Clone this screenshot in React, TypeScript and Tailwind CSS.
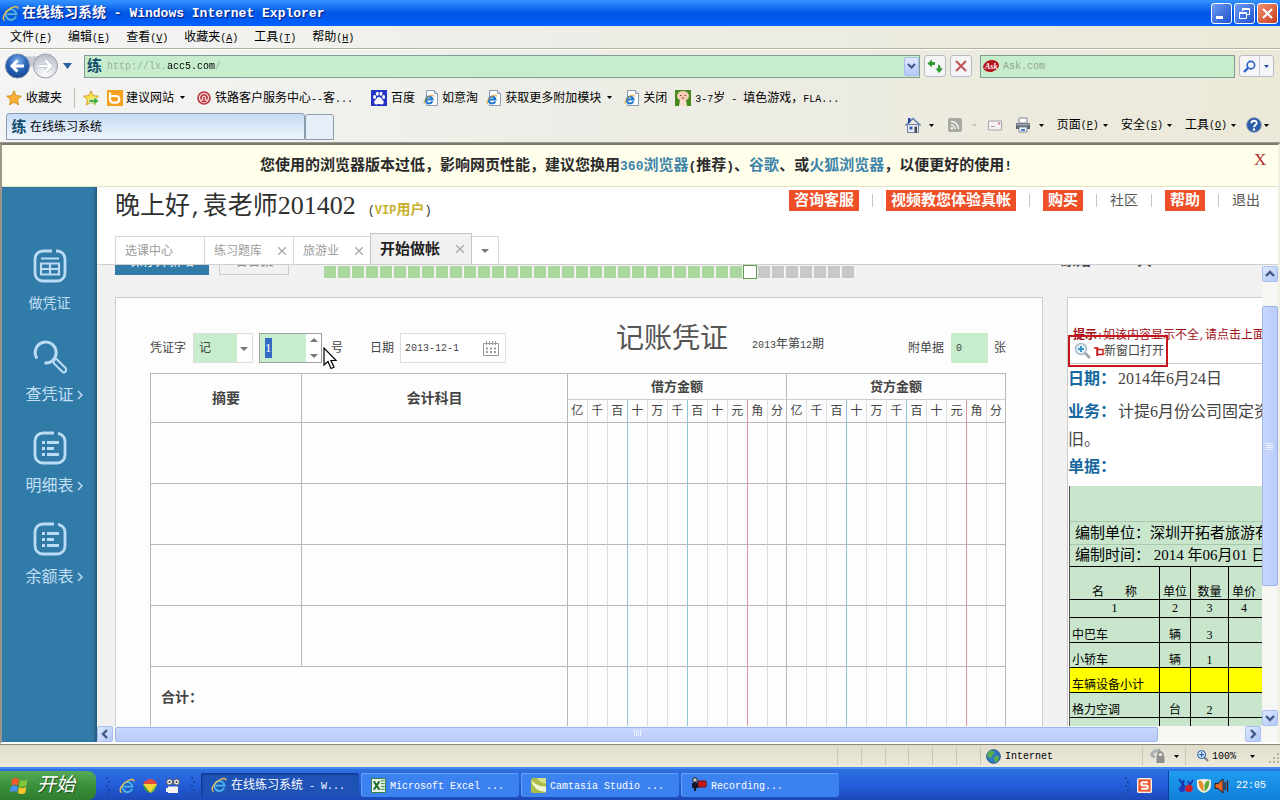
import React, { useEffect, useRef } from 'react';
import { clsx } from 'clsx';

type MixProps = { s: string; latin?: string };

// Chinese runs keep the parent's size, latin runs get a half-width monospace face
const Mix: React.FC<MixProps> = ({ s, latin = 'text-[10px]' }) => (
    <>
        {s.split(/([\x20-\x7e]+)/).filter(Boolean).map((part, i) =>
            /^[\x20-\x7e]/.test(part)
                ? <span key={i} className={clsx("whitespace-pre font-['Liberation_Mono']", latin)}>{part}</span>
                : <React.Fragment key={i}>{part}</React.Fragment>
        )}
    </>
);

const Caret: React.FC<{ className?: string }> = ({ className = 'text-black' }) => (
    <svg viewBox="0 0 5 3" className={clsx('h-[3px] w-[5px] shrink-0', className)}><path d="M0 0h5L2.500 3z" fill="currentColor" /></svg>
);

const IeLogo: React.FC<{ className?: string }> = ({ className = 'h-4 w-4' }) => (
    <svg viewBox="0 0 16 16" className={clsx('shrink-0', className)} fill="none">
        <path d="M13.200 10.800A5 5 0 1 1 13.500 8.600H5" stroke="#1b62b8" strokeWidth="3.400" />
        <path d="M13.200 10.800A5 5 0 1 1 13.500 8.600H5" stroke="#4fb0f2" strokeWidth="1.800" />
        <path d="M2.600 14.800C-1 12.500 3 6 8.400 3c3.300-1.900 6.700-2.300 6.600.6" stroke="#f2c14a" strokeWidth="1.300" />
    </svg>
);

const IePage = () => (
    <svg viewBox="0 0 16 16" className="h-4 w-4 shrink-0">
        <path d="M3.500.5h8l3 3v12h-11z" fill="#fdfdfd" stroke="#8c9bb0" />
        <path d="M11.500.5v3h3" fill="#dfe6ef" stroke="#8c9bb0" />
        <g fill="none">
            <path d="M9.300 11.300A3.400 3.400 0 1 1 9.500 9.500H3.500" stroke="#1f78d0" strokeWidth="2" />
            <path d="M1.500 13.800C-.4 12 4 6.300 8.500 5.200c1.700-.4 2.400.2 2.200 1.400" stroke="#e0a020" />
        </g>
    </svg>
);

const LianIcon = () => (
    <span className="w-4 shrink-0 text-[15px] leading-4 font-bold text-[#134d6e]">练</span>
);

const MENUS: [string, string][] = [['文件', 'F'], ['编辑', 'E'], ['查看', 'V'], ['收藏夹', 'A'], ['工具', 'T'], ['帮助', 'H']];

const AccessKey: React.FC<{ k: string }> = ({ k }) => (
    <span className="font-['Liberation_Mono'] text-[10px]">(<u>{k}</u>)</span>
);

const TitleBar = () => (
    <header className="flex h-[26px] shrink-0 items-center bg-linear-to-b from-[#3593ff] via-[#0054e3] to-[#0062ff] pr-[2px] pl-[2px]">
        <IeLogo className="h-[17px] w-[17px]" />
        <h1 className="ml-[3px] text-[14px] font-bold text-white [text-shadow:1px_1px_1px_#0a1883]">
            <Mix s="在线练习系统 - Windows Internet Explorer" latin="text-[13px]" />
        </h1>
        <div className="ml-auto flex gap-[2px]">
            <button aria-label="最小化" className="h-[21px] w-[21px] rounded-[3px] border border-white bg-linear-to-br from-[#6f9cf4] to-[#1f50cc]">
                <svg viewBox="0 0 19 19"><path d="M4 12h7v3H4z" fill="#fff" /></svg>
            </button>
            <button aria-label="还原" className="h-[21px] w-[21px] rounded-[3px] border border-white bg-linear-to-br from-[#6f9cf4] to-[#1f50cc]">
                <svg viewBox="0 0 19 19" fill="none" stroke="#fff"><path d="M7.500 7V4.500h7v6H12M7 5.500h8M4.500 8.500h7v6h-7zM4 9.500h8" /></svg>
            </button>
            <button aria-label="关闭" className="h-[21px] w-[21px] rounded-[3px] border border-white bg-linear-to-br from-[#f09070] to-[#c8391a]">
                <svg viewBox="0 0 19 19"><path d="M5 5l9 9M14 5l-9 9" stroke="#fff" strokeWidth="2.200" /></svg>
            </button>
        </div>
    </header>
);

const AddressRow = () => (
    <div className="flex h-[33px] shrink-0 items-center border-t border-white pr-[6px] pl-[5px]">
        <svg viewBox="0 0 56 28" className="h-7 w-14 shrink-0">
            <defs>
                <radialGradient id="back" cx=".5" cy=".3" r=".75"><stop offset="0" stopColor="#86b4ee" /><stop offset=".5" stopColor="#2a66b8" /><stop offset="1" stopColor="#0f3c8c" /></radialGradient>
                <radialGradient id="fwd" cx=".5" cy=".8" r=".8"><stop offset="0" stopColor="#fff" /><stop offset="1" stopColor="#b6bcc8" /></radialGradient>
            </defs>
            <path d="M8 2.500q20 4 38 0v12H8z" fill="#c6cbd3" />
            <circle cx="12.500" cy="14" r="12" fill="url(#back)" stroke="#7d8da8" />
            <circle cx="40.500" cy="14" r="12" fill="url(#fwd)" stroke="#9aa0ac" />
            <path d="M19 14H8M12.500 8.500L7 14l5.500 5.500" stroke="#fff" strokeWidth="3" fill="none" />
            <path d="M34 14h11M40.500 8.500L46 14l-5.500 5.500" stroke="#b4bac6" strokeWidth="4" fill="none" />
            <path d="M34 14h11M40.500 8.500L46 14l-5.500 5.500" stroke="#fff" strokeWidth="2.600" fill="none" />
        </svg>
        <svg viewBox="0 0 9 6" className="ml-[2px] h-[6px] w-[9px] shrink-0"><path d="M0 0h9L4.500 6z" fill="#2b5f9e" /></svg>
        <div className="ml-3 flex h-[23px] min-w-0 flex-1 items-center border border-[#7f9f96] bg-[#c7edcc] pl-[2px]">
            <LianIcon />
            <input
                aria-label="地址"
                defaultValue="http://lx.acc5.com/"
                className="ml-[4px] h-4 min-w-0 flex-1 bg-[linear-gradient(90deg,#98a898_60px,#000_60px,#000_108px,#98a898_108px)] bg-clip-text font-['Liberation_Mono'] text-[10px] text-transparent outline-none"
            />
            <button aria-label="展开地址" className="flex h-[19px] w-[15px] items-center justify-center rounded-[2px] border border-[#a9bef0] bg-linear-to-b from-[#dfe8ff] to-[#b5c9f8]">
                <svg viewBox="0 0 9 6" className="h-[6px] w-[9px]"><path d="M1 1l3.500 3.500L8 1" fill="none" stroke="#3d5588" strokeWidth="2" /></svg>
            </button>
        </div>
        <button aria-label="刷新" className="ml-1 flex h-[22px] w-[22px] shrink-0 items-center justify-center rounded-[3px] border border-[#b9bcc4] bg-[#f5f5f7]">
            <svg viewBox="0 0 16 16" className="h-4 w-4" fill="#2f9a2f"><path d="M5 1.500L.500 5.500 5 9.500V7h3V4H5z" /><path d="M11 6.500v4H8.500L12 15l4-4.500h-2.300c0-2.500-.7-3.700-2.700-4z" /></svg>
        </button>
        <button aria-label="停止" className="ml-1 flex h-[22px] w-[22px] shrink-0 items-center justify-center rounded-[3px] border border-[#b9bcc4] bg-[#f5f5f7]">
            <svg viewBox="0 0 12 12" className="h-3 w-3"><path d="M1 1l10 10M11 1L1 11" stroke="#c05a5a" strokeWidth="2.200" /></svg>
        </button>
        <label className="ml-2 flex h-[23px] w-[255px] shrink-0 items-center border border-[#7f9f96] bg-[#c7edcc] pl-[2px]">
            <svg viewBox="0 0 16 14" className="h-[14px] w-4 shrink-0">
                <ellipse cx="8" cy="7" rx="8" ry="5.800" fill="#b5131c" transform="rotate(-14 8 7)" />
                <text x="2" y="10" fontSize="8" fontStyle="italic" fontWeight="bold" fill="#fff">Ask</text>
            </svg>
            <input placeholder="Ask.com" className="ml-1 min-w-0 flex-1 font-['Liberation_Mono'] text-[10px] outline-none placeholder:text-[#93a393]" />
        </label>
        <div className="ml-1 flex h-[22px] w-[35px] shrink-0 rounded-[3px] border border-[#b9bcc4] bg-[#f5f5f7]">
            <button aria-label="搜索" className="flex w-5 items-center justify-center border-r border-[#c9ccd4]">
                <svg viewBox="0 0 14 14" className="h-[13px] w-[13px]" fill="none" stroke="#2a62c8"><circle cx="8.500" cy="5.500" r="4" strokeWidth="1.800" /><path d="M5.500 8.500L1 13" strokeWidth="2.400" /></svg>
            </button>
            <button aria-label="搜索选项" className="flex flex-1 items-center justify-center"><Caret className="text-[#1f4f9e]" /></button>
        </div>
    </div>
);

const Star: React.FC<{ add?: boolean }> = ({ add }) => (
    <svg viewBox="0 0 16 16" className="h-4 w-4 shrink-0">
        <path d="M8 .8l2.200 4.800 5.200.6-3.900 3.500 1.100 5.200L8 12.300l-4.600 2.600 1.100-5.200L.6 6.200l5.200-.6z" fill={add ? '#f7e14c' : '#fbb034'} stroke="#c98a14" strokeWidth=".8" />
        {add && <path d="M6 9.500h5V7l5 4-5 4v-2.500H6z" fill="#3fae3a" stroke="#fff" strokeWidth=".6" />}
    </svg>
);

const FavoritesBar = () => (
    <nav className="flex h-[31px] shrink-0 items-center pl-[6px] text-[12px] whitespace-nowrap">
        <button className="flex items-center gap-1"><Star />收藏夹</button>
        <span className="ml-3 h-5 w-px bg-[#bdbdb5]" />
        <span className="ml-2 flex"><Star add /></span>
        <a href="#bing" className="ml-2 flex items-center gap-[3px]">
            <svg viewBox="0 0 16 16" className="h-4 w-4"><path d="M0 0h16v16H0z" fill="#f5a11c" /><path d="M3 2.500v3.500h6.500a3.400 3.400 0 0 1 0 6.700H6.400a3.400 3.400 0 0 1-3.400-3.400V6" fill="none" stroke="#fff" strokeWidth="2.200" /></svg>
            建议网站
            <span className="ml-[3px]"><Caret /></span>
        </a>
        <a href="#rail" className="ml-3 flex items-center gap-1">
            <svg viewBox="0 0 14 14" className="h-[14px] w-[14px]"><circle cx="7" cy="7" r="6" fill="#f6dada" stroke="#b8343c" strokeWidth="1.600" /><path d="M4.500 8.500a3 3 0 1 1 5 0M7 6v4M4.500 10.500h5" stroke="#b8343c" strokeWidth="1.500" fill="none" /></svg>
            <span><Mix s="铁路客户服务中心--客..." /></span>
        </a>
        <a href="#baidu" className="ml-[18px] flex items-center gap-1">
            <svg viewBox="0 0 16 16" className="h-4 w-4"><path d="M0 0h16v16H0z" fill="#2534c4" /><g fill="#fff"><ellipse cx="3.600" cy="7" rx="1.500" ry="2" /><ellipse cx="6.300" cy="3.700" rx="1.500" ry="2" /><ellipse cx="10" cy="3.700" rx="1.500" ry="2" /><ellipse cx="12.600" cy="7" rx="1.500" ry="2" /><path d="M8 7c2 0 2.500 2 4 3.500s.7 4-1.500 4c-1.200 0-1.500-.4-2.500-.4s-1.300.4-2.500.4c-2.200 0-3-2.500-1.500-4S6 7 8 7z" /></g></svg>
            百度
        </a>
        <a href="#taobao" className="ml-2 flex items-center gap-[3px]"><IePage />如意淘</a>
        <a href="#addons" className="ml-2 flex items-center gap-[3px]"><IePage />获取更多附加模块<span className="ml-[3px]"><Caret /></span></a>
        <a href="#close" className="ml-3 flex items-center gap-[3px]"><IePage />关闭</a>
        <a href="#game" className="ml-2 flex items-center gap-1">
            <svg viewBox="0 0 16 16" className="h-4 w-4"><path d="M0 0h16v16H0z" fill="#47881f" /><ellipse cx="8" cy="6" rx="6" ry="5" fill="#f4cdb4" /><path d="M5 10h6l1 6H4z" fill="#f8e0cc" /><path d="M5 5.500h1.500M9.500 5.500H11M7 8h2" stroke="#8b4a32" /></svg>
            <span><Mix s="3-7岁 - 填色游戏，FLA..." /></span>
        </a>
    </nav>
);

const CommandBar = () => (
    <div className="flex h-[30px] shrink-0 items-start border-b border-[#9a9a92] pl-[6px] text-[12px]">
        <button className="flex h-[27px] w-[299px] items-center gap-[3px] rounded-t-[3px] border border-[#8b9bb0] bg-linear-to-b from-[#c7dcf6] to-[#eef4fb] pl-1">
            <LianIcon />在线练习系统
        </button>
        <button aria-label="新选项卡" className="mt-px h-[26px] w-[29px] rounded-t-[3px] border border-[#8b9bb0] bg-[#e6eef8]" />
        <div className="ml-auto flex h-6 items-center pr-[11px]">
            <svg viewBox="0 0 16 16" className="h-4 w-4"><path d="M2.500 7.500h11v8h-11z" fill="#eef0f6" stroke="#70809c" /><path d="M.5 8.500L8 1.500l7.500 7" fill="none" stroke="#6a83b8" strokeWidth="1.600" /><path d="M3 1h2.500v4L3 7z" fill="#2c3f9c" /><path d="M4.500 9.500h3v3h-3z" fill="#2f5fb0" /><path d="M9.500 9.500h2.500v6H9.500z" fill="#3b4356" /></svg>
            <span className="ml-2 flex"><Caret /></span>
            <svg viewBox="0 0 14 14" className="ml-[14px] h-[14px] w-[14px]"><rect width="14" height="14" rx="2" fill="#a9a9a2" /><g fill="none" stroke="#f4f4f0" strokeWidth="1.500"><path d="M3 7a4 4 0 0 1 4 4M3 3.500A7.500 7.500 0 0 1 10.500 11" /></g><circle cx="3.800" cy="10.200" r="1.200" fill="#f4f4f0" /></svg>
            <span className="ml-[10px] flex"><Caret className="text-[#c8c6b8]" /></span>
            <svg viewBox="0 0 14 10" className="ml-[11px] h-[11px] w-[14px]"><path d="M.5.5h13v9H.5z" fill="#f3f1f4" stroke="#a8a0a8" /><path d="M10 2h2v2h-2z" fill="#c87a86" /><path d="M3 6h4" stroke="#a8a0a8" /></svg>
            <svg viewBox="0 0 16 16" className="ml-[13px] h-4 w-4"><path d="M4 1h8v5H4z" fill="#fff" stroke="#808890" /><path d="M1 6h14v6H1z" fill="#5d6670" /><path d="M1.500 6.500h13v2h-13z" fill="#9aa4ae" /><path d="M4 10h8v5H4z" fill="#fff" stroke="#808890" /><path d="M6 12h4v2H6z" fill="#3f88c8" /></svg>
            <span className="ml-2 flex"><Caret /></span>
            {[['页面', 'P'], ['安全', 'S'], ['工具', 'O']].map(([label, k]) => (
                <button key={k} className="ml-[13px] flex items-center whitespace-nowrap">
                    {label}<AccessKey k={k} /><span className="ml-1 flex"><Caret /></span>
                </button>
            ))}
            <svg viewBox="0 0 16 16" className="ml-[10px] h-4 w-4"><circle cx="8" cy="8" r="7.300" fill="#2c5ca8" stroke="#7f93b8" /><path d="M5.300 6.300C5.300 3 10.700 3 10.700 6.100 10.700 8 8 8 8 10.200" stroke="#fff" strokeWidth="1.900" fill="none" /><circle cx="8" cy="12.500" r="1.200" fill="#fff" /></svg>
            <span className="ml-[2px] flex"><Caret /></span>
        </div>
    </div>
);

const Banner = () => (
    <div className="flex h-[42px] shrink-0 items-center border-b border-[#e3e3c8] bg-[#fffeeb]">
        <p className="flex-1 pl-4 text-center text-[15px] font-bold text-[#2a2a2a]">
            您使用的浏览器版本过低，影响网页性能，建议您换用
            <a href="#360" className="text-[#3d84a8]"><Mix s="360浏览器" latin="text-[13px]" /></a>
            <Mix s="(推荐)、" latin="text-[13px]" />
            <a href="#chrome" className="text-[#3d84a8]">谷歌</a>、或
            <a href="#firefox" className="text-[#3d84a8]">火狐浏览器</a>，以便更好的使用<Mix s="!" latin="text-[13px]" />
        </p>
        <button aria-label="关闭提示" className="mb-3 w-6 pr-3 font-['Liberation_Serif'] text-[17px] leading-5 text-[#b03030]">X</button>
    </div>
);

const SheetIcon = () => (
    <svg viewBox="0 0 34 34" className="h-[34px] w-[34px]" fill="none" stroke="#bcdcf6">
        <path d="M23 2h1a8 8 0 0 1 8 8v14a8 8 0 0 1-8 8H10a8 8 0 0 1-8-8V10a8 8 0 0 1 8-8h9" strokeWidth="2.800" />
        <path d="M8 9.500h18" strokeWidth="2" />
        <path d="M8 14.500h18v11H8zM8 20h18M17 14.500v11" strokeWidth="2.200" />
    </svg>
);

const SearchIcon = () => (
    <svg viewBox="0 0 34 34" className="h-[34px] w-[34px]" fill="none" stroke="#bcdcf6">
        <path d="M4 18.500A10.500 10.500 0 1 1 11.500 23" strokeWidth="3" />
        <path d="M21 20l2.500-1 9 9a2.200 2.200 0 0 1-3.500 3.500l-8.500-8.500z" strokeWidth="2" />
    </svg>
);

const ListIcon = () => (
    <svg viewBox="0 0 34 34" className="h-[34px] w-[34px]" fill="none" stroke="#bcdcf6">
        <path d="M25 2.300A8 8 0 0 1 32 10v14a8 8 0 0 1-8 8H10a8 8 0 0 1-8-8V10a8 8 0 0 1 8-8h11" strokeWidth="2.800" />
        <path d="M9 11.500h3M14 11.500h12M9 17.500h3M14 17.500h7M9 23.500h3M14 23.500h12" strokeWidth="2.800" />
    </svg>
);

const SIDE_ITEMS = [
    { label: '做凭证', icon: <SheetIcon />, sub: false },
    { label: '查凭证', icon: <SearchIcon />, sub: true },
    { label: '明细表', icon: <ListIcon />, sub: true },
    { label: '余额表', icon: <ListIcon />, sub: true },
];

const Sidebar = () => (
    <aside className="w-[95px] shrink-0 bg-[#317ba8] pt-[62px] shadow-[inset_-3px_0_3px_-1px_#25597c]">
        {SIDE_ITEMS.map(({ label, icon, sub }) => (
            <a key={label} href="#" className="flex h-[91px] flex-col items-center text-[#c3dff5]">
                {icon}
                <span className={clsx('mt-[9px] flex items-center gap-[3px] leading-6', sub ? 'pl-[9px] text-[16px]' : 'text-[14px]')}>
                    {label}
                    {sub && <svg viewBox="0 0 6 10" className="h-[10px] w-[6px]"><path d="M1 1l4 4-4 4" fill="none" stroke="#c3dff5" strokeWidth="1.400" /></svg>}
                </span>
            </a>
        ))}
    </aside>
);

const Sep = () => <span className="h-[13px] w-px bg-[#c8c8c8]" />;

const Pill: React.FC<{ children: string }> = ({ children }) => (
    <a href="#" className="h-[21px] bg-[#ee4f26] px-[5px] text-[15px] leading-5 font-bold text-white">{children}</a>
);

const TabClose = () => (
    <svg viewBox="0 0 8 8" className="h-2 w-2"><path d="M0 0l8 8M8 0L0 8" stroke="#a8a8a8" strokeWidth="1.300" /></svg>
);

const PageHeader = () => (
    <div className="flex h-[78px] shrink-0 flex-col justify-between border-b border-[#cfcfcf] bg-white">
        <div className="flex items-start justify-between pr-[18px] pl-[18px]">
            <div className="flex items-baseline text-[#303030]">
                <strong className="text-[25px] leading-[38px] font-normal">
                    <Mix s="晚上好," latin="text-[21px]" />袁老师<span className="text-[26px]">201402</span>
                </strong>
                <span className="ml-3 text-[14px]">
                    <Mix s="(" latin="text-[12px]" /><b className="text-[#c9b02c]"><Mix s="VIP用户" latin="text-[12px]" /></b><Mix s=")" latin="text-[12px]" />
                </span>
            </div>
            <nav className="flex items-center gap-[13px] pt-[3px] text-[14px] whitespace-nowrap text-[#555]">
                <Pill>咨询客服</Pill><Sep />
                <Pill>视频教您体验真帐</Pill><Sep />
                <Pill>购买</Pill><Sep />
                <a href="#">社区</a><Sep />
                <Pill>帮助</Pill><Sep />
                <a href="#">退出</a>
            </nav>
        </div>
        <div className="flex items-end pl-[18px] text-[12px] text-[#9a9a9a]">
            <button className="h-[28px] w-[90px] border border-b-0 border-[#d8d8d8] pl-[9px] text-left">选课中心</button>
            <button className="flex h-[28px] w-[89px] items-center justify-between border-t border-r border-[#d8d8d8] pr-[7px] pl-[9px]">练习题库<TabClose /></button>
            <button className="flex h-[28px] w-[76px] items-center justify-between border-t border-[#d8d8d8] pr-[7px] pl-[9px]">旅游业<TabClose /></button>
            <button className="flex h-[31px] w-[102px] items-center justify-between border border-b-0 border-[#c4c4c4] bg-[#f1f1f1] pr-[7px] pl-[9px] text-[15px] font-bold text-[#222]">开始做帐<TabClose /></button>
            <button aria-label="更多标签" className="flex h-[28px] w-[27px] items-center justify-center border-t border-r border-[#d8d8d8]">
                <svg viewBox="0 0 8 4" className="h-1 w-2"><path d="M0 0h8L4 4z" fill="#777" /></svg>
            </button>
        </div>
    </div>
);

const STEPS = Array.from({ length: 38 }, (_, i) => i);

// Bottom edge of the toolbar that is scrolled under the header
const StepBar = () => (
    <div className="flex h-[14px] items-start">
        <div className="flex h-[10px] items-end whitespace-nowrap">
            <button className="h-7 w-[94px] shrink-0 bg-[#317ba8] text-[13px] text-white">保存并新增</button>
            <button className="ml-[10px] h-7 w-[70px] shrink-0 border border-[#ccc] text-[13px] text-[#777]">看答案</button>
        </div>
        <div className="ml-[35px] flex h-[14px] items-center">
            {STEPS.map((n) => (
                <span
                    key={n}
                    className={clsx(
                        n === 30 ? 'mr-px -ml-px h-[14px] w-[14px] border border-[#5c9a4c] bg-white' : 'mr-[2px] h-3 w-3',
                        n < 30 && 'bg-[#a9d79d]',
                        n > 30 && 'bg-[#c8c8c8]'
                    )}
                />
            ))}
        </div>
        <div className="ml-[205px] flex h-[4px] items-end gap-[46px] text-[15px] leading-[18px] font-bold whitespace-nowrap text-[#444]">
            <span>原始</span><span>共</span>
        </div>
    </div>
);

const VoucherForm = () => {
    const numberRef = useRef<HTMLInputElement>(null);

    useEffect(() => {
        numberRef.current?.focus();
        numberRef.current?.select();
    }, []);

    return (
        <form className="flex h-[30px] items-center text-[12px] whitespace-nowrap text-[#444]">
            <label htmlFor="word">凭证字</label>
            <div className="relative ml-[7px]">
                <select id="word" className="h-[30px] w-[60px] appearance-none border border-[#ddd] bg-[linear-gradient(90deg,#c7edcc_43px,#fff_43px)] pl-[5px] outline-none">
                    <option>记</option>
                </select>
                <svg viewBox="0 0 8 4" className="pointer-events-none absolute top-[14px] right-[5px] h-1 w-2"><path d="M0 0h8L4 4z" fill="#777" /></svg>
            </div>
            <div className="ml-[6px] flex h-[30px] w-[63px] border border-[#a0a0a0] bg-white">
                <input ref={numberRef} id="no" aria-label="凭证号" defaultValue="1" className="w-[46px] bg-[#c7edcc] pl-[5px] text-[13px] outline-none selection:bg-[#316ac5] selection:text-white" />
                <div className="flex flex-1 flex-col items-center justify-between py-1">
                    <button type="button" aria-label="增加" className="flex"><svg viewBox="0 0 8 4" className="h-1 w-2"><path d="M0 4h8L4 0z" fill="#777" /></svg></button>
                    <button type="button" aria-label="减少" className="flex"><svg viewBox="0 0 8 4" className="h-1 w-2"><path d="M0 0h8L4 4z" fill="#777" /></svg></button>
                </div>
            </div>
            <label htmlFor="no" className="relative ml-[9px]">
                号
                <svg viewBox="0 0 14 23" className="absolute top-2 -left-2 h-[23px] w-[14px]"><path d="M1 1v17l4-3.500 3 7 3-1.300-3-6.700h5.200z" fill="#fff" stroke="#000" strokeWidth="1.200" /></svg>
            </label>
            <label htmlFor="date" className="ml-[27px]">日期</label>
            <div className="ml-[6px] flex h-[30px] w-[106px] items-center border border-[#ddd] bg-white pr-[5px] pl-1">
                <input id="date" defaultValue="2013-12-1" className="w-[78px] font-['Liberation_Mono'] text-[10px] outline-none" />
                <svg viewBox="0 0 16 16" className="h-4 w-4" fill="none" stroke="#999"><path d="M.5 3.500h15v12H.5zM3.500 1v4M6.500 1v4M9.500 1v4M12.500 1v4" /><path d="M3 8.500h10M3 12h10" strokeWidth="2" strokeDasharray="2 2" /></svg>
            </div>
            <h2 className="mb-[18px] ml-[110px] text-[28px] leading-10 text-[#555]">记账凭证</h2>
            <span className="mb-2 ml-6 text-[12px]"><Mix s="2013年第12期" /></span>
            <label htmlFor="attach" className="mr-[7px] ml-auto">附单据</label>
            <input id="attach" defaultValue="0" className="h-[30px] w-[37px] bg-[#c7edcc] pl-[5px] font-['Liberation_Mono'] text-[10px] outline-none" />
            <span className="ml-[6px]">张</span>
        </form>
    );
};

const DIGITS = ['亿', '千', '百', '十', '万', '千', '百', '十', '元', '角', '分'];

const digitBorder = (i: number) => {
    if (i === 10) return 'border-r-[#b8b8b8]';
    if (i === 2 || i === 5) return 'border-r-[#8fc6de]';
    if (i === 8) return 'border-r-[#e2979f]';
    return 'border-r-[#dedede]';
};

const VoucherTable = () => (
    <table className="mt-[10px] w-full table-fixed border-separate border-spacing-0 border-t border-l border-[#b8b8b8] text-[12px] text-[#444]">
        <colgroup>
            <col className="w-[151px]" />
            <col />
            {[0, 1].map((side) => DIGITS.map((_, i) => (
                <col key={`${side}-${i}`} className={i === 10 ? 'w-[19px]' : 'w-[20px]'} />
            )))}
        </colgroup>
        <thead>
            <tr className="h-[26px]">
                <th rowSpan={2} className="border-r border-b border-[#b8b8b8] text-[14px]">摘要</th>
                <th rowSpan={2} className="border-r border-b border-[#b8b8b8] text-[14px]">会计科目</th>
                <th colSpan={11} className="border-r border-b border-r-[#b8b8b8] border-b-[#ccc] text-[13px] leading-5">借方金额</th>
                <th colSpan={11} className="border-r border-b border-r-[#b8b8b8] border-b-[#ccc] text-[13px] leading-5">贷方金额</th>
            </tr>
            <tr className="h-[23px]">
                {[0, 1].map((side) => DIGITS.map((d, i) => (
                    <th key={`${side}-${i}`} className={clsx('border-r border-b border-b-[#b8b8b8] p-0 font-normal', digitBorder(i))}>{d}</th>
                )))}
            </tr>
        </thead>
        <tbody>
            {[0, 1, 2, 3, 4].map((row) => (
                <tr key={row} className="h-[61px]">
                    {row < 4
                        ? <><td className="border-r border-b border-[#b8b8b8]" /><td className="border-r border-b border-[#b8b8b8]" /></>
                        : <th colSpan={2} className="border-r border-b border-[#b8b8b8] pl-[10px] text-left text-[14px]">合计：</th>}
                    {[0, 1].map((side) => DIGITS.map((_, i) => (
                        <td key={`${side}-${i}`} className={clsx('border-r border-b border-b-[#b8b8b8] p-0', digitBorder(i))} />
                    )))}
                </tr>
            ))}
        </tbody>
    </table>
);

const ASSETS = [
    { name: '中巴车', unit: '辆', count: '3' },
    { name: '小轿车', unit: '辆', count: '1' },
    { name: '车辆设备小计', unit: '', count: '', total: true },
    { name: '格力空调', unit: '台', count: '2' },
    { name: '', unit: '', count: '' },
];

const TaskPanel = () => (
    <section className="w-[195px] shrink-0 overflow-hidden border-t border-l border-[#ccc] bg-white whitespace-nowrap">
        <div className="relative h-[66px] border-b border-[#ccc] pt-[27px] pl-[5px] text-[12px] leading-5 text-[#a01018]">
            <b>提示</b><Mix s=":" />如该内容显示不全<Mix s="," />请点击上面
            <a href="#" className="absolute top-[37px] left-0 flex h-8 w-[100px] items-center gap-[5px] border-2 border-[#c4161c] pl-1 text-[#444]">
                <svg viewBox="0 0 18 18" className="h-[18px] w-[18px] shrink-0"><path d="M11 11l5 5" stroke="#a8a8a8" strokeWidth="3" /><circle cx="7" cy="7" r="5.500" fill="#e4f2fa" stroke="#a8b8c4" strokeWidth="1.500" /><path d="M7 4v6M4 7h6" stroke="#3a94c8" strokeWidth="2" /></svg>
                <span className="flex"><svg viewBox="0 0 10 12" className="-ml-[3px] h-3 w-[10px] self-center"><path d="M0 3h3v8M3.500 2v9M4 4.500h5v5H4" stroke="#c4161c" fill="none" strokeWidth="1.400" /></svg>新窗口打开</span>
            </a>
        </div>
        <div className="text-[16px] text-[#444]">
            <p className="leading-[30px]"><b className="mr-[2px] text-[#16699e]">日期：</b>2014年6月24日</p>
            <p className="pt-1 leading-7"><b className="mr-[2px] text-[#16699e]">业务：</b>计提6月份公司固定资产折<br />旧。</p>
            <p className="leading-[26px]"><b className="text-[#16699e]">单据：</b></p>
        </div>
        <table className="mt-[6px] ml-px w-[240px] table-fixed border-separate border-spacing-0 border-l border-[#555] bg-[#c9e6cd] text-[12px] leading-[13px] text-black [&_td]:p-0 [&_th]:p-0 [&_th]:font-normal">
            <colgroup><col className="w-[90px]" /><col className="w-[31px]" /><col className="w-[38px]" /><col /></colgroup>
            <thead>
                <tr className="h-9"><th colSpan={4} className="border-b border-[#a9c9ad]" /></tr>
                <tr className="h-[23px]"><th colSpan={4} className="border-b border-[#a9c9ad] text-left text-[15px]"><span className="pl-[5px]">编制单位：深圳开拓者旅游有限公司</span></th></tr>
                <tr className="h-[22px]"><th colSpan={4} className="border-b border-black text-left text-[15px]"><span className="pl-[5px]">编制时间：&nbsp;2014 年06月01 日</span></th></tr>
                <tr className="h-[33px] align-bottom">
                    <th className="border-r border-b border-black"><span className="flex justify-center gap-[21px]"><span>名</span><span>称</span></span></th>
                    <th className="border-r border-b border-black">单位</th>
                    <th className="border-r border-b border-black">数量</th>
                    <th className="border-b border-black"><span className="block pl-[3px] text-left">单价</span></th>
                </tr>
                <tr className="h-[18px]">
                    <th className="border-r border-b border-black">1</th>
                    <th className="border-r border-b border-black">2</th>
                    <th className="border-r border-b border-black">3</th>
                    <th className="border-b border-black"><span className="block pl-3 text-left">4</span></th>
                </tr>
            </thead>
            <tbody>
                {ASSETS.map((row, i) => (
                    <tr key={i} className={clsx('h-[25px] align-bottom', row.total && 'bg-[#ffff00]')}>
                        <td className="border-r border-b border-black"><span className="pl-[2px]">{row.name}</span></td>
                        <td className="border-r border-b border-black text-center">{row.unit}</td>
                        <td className="border-r border-b border-black text-center">{row.count}</td>
                        <td className="border-b border-black" />
                    </tr>
                ))}
            </tbody>
        </table>
    </section>
);

const ScrollButton: React.FC<{ label: string; d: string }> = ({ label, d }) => (
    <button aria-label={label} className="flex h-4 w-4 shrink-0 items-center justify-center rounded-[2px] border border-[#a9bff0] bg-linear-to-br from-[#dfe9ff] to-[#b3c8f7]">
        <svg viewBox="0 0 10 10" className="h-[10px] w-[10px]"><path d={d} fill="none" stroke="#3f5888" strokeWidth="2.400" /></svg>
    </button>
);

const VScroll = () => (
    <div className="flex w-4 shrink-0 flex-col bg-[#f6f6f3] pt-px">
        <ScrollButton label="向上" d="M1 7l4-4 4 4" />
        <div className="flex flex-1 flex-col pt-6 pb-[124px]">
            <div className="flex flex-1 items-center justify-center rounded-[2px] border border-[#9db4ec] bg-linear-to-r from-[#cad8fd] to-[#b9cbfa]">
                <svg viewBox="0 0 8 8" className="h-2 w-2"><path d="M0 1.500h7M0 3.500h7M0 5.500h7M0 7.500h7" stroke="#eef4ff" /></svg>
            </div>
        </div>
        <ScrollButton label="向下" d="M1 3l4 4 4-4" />
    </div>
);

const HScroll = () => (
    <div className="flex h-4 shrink-0 items-center bg-[#f6f6f3] pr-[17px]">
        <ScrollButton label="向左" d="M7 1L3 5l4 4" />
        <div className="flex flex-1 pr-[87px] pl-[2px]">
            <div className="flex h-[15px] flex-1 items-center justify-center rounded-[2px] border border-[#9db4ec] bg-linear-to-b from-[#cad8fd] to-[#b9cbfa]">
                <svg viewBox="0 0 8 8" className="h-2 w-2"><path d="M1.500 0v6M3.500 0v6M5.500 0v6M7.500 0v6" stroke="#eef4ff" /></svg>
            </div>
        </div>
        <ScrollButton label="向右" d="M3 1l4 4-4 4" />
    </div>
);

const StatusBar = () => (
    <footer className="flex h-[23px] shrink-0 items-center border-t border-[#8a887c] bg-linear-to-b from-[#dfdccb] to-[#eeebdd] text-[12px]">
        <div className="ml-auto flex h-[18px] w-[144px] justify-between">
            {[0, 1, 2, 3, 4, 5, 6].map((n) => <span key={n} className="w-px bg-[#c9c6b4]" />)}
        </div>
        <div className="flex w-[161px] items-center gap-1 pl-[5px]">
            <svg viewBox="0 0 16 16" className="h-[15px] w-[15px]"><circle cx="8" cy="8" r="7.300" fill="#2f78c4" stroke="#21508a" /><path d="M3 3c3-2 6-1 6 1S6 6 6 8s-3 2-4 0 0-4 1-5zM9 8c2-1 5-1 5 1s-3 5-4 5-2-5-1-6z" fill="#58b04a" /></svg>
            <Mix s="Internet" />
        </div>
        <span className="h-[18px] w-px bg-[#c9c6b4]" />
        <div className="flex w-[42px] items-center justify-end gap-2 pr-[6px]">
            <svg viewBox="0 0 16 16" className="h-4 w-4"><path d="M1 7q3-5 8-4l-1-2M1 7l4 2" stroke="#a8b0b4" strokeWidth="3" fill="none" /><path d="M6.500 8h8v7h-8z" fill="#90908c" /><path d="M8 8.500V6.500a2.500 2.500 0 0 1 5 0v2" stroke="#888" strokeWidth="1.500" fill="none" /></svg>
            <Caret />
        </div>
        <span className="h-[18px] w-px bg-[#c9c6b4]" />
        <button className="flex w-[94px] items-center pl-[11px]">
            <svg viewBox="0 0 13 13" className="mr-[3px] h-3 w-3"><path d="M8 8l4 4" stroke="#888" strokeWidth="2.400" /><circle cx="5" cy="5" r="4.200" fill="#e6f1fb" stroke="#2f66ac" strokeWidth="1.200" /><path d="M5 2.500v5M2.500 5h5" stroke="#2f66ac" strokeWidth="1.500" /></svg>
            <Mix s="100%" />
            <span className="ml-[14px] flex"><Caret /></span>
            <svg viewBox="0 0 12 12" className="mt-1 ml-auto h-3 w-3"><path d="M9 1h2v2H9zM5 5h2v2H5zM9 5h2v2H9zM1 9h2v2H1zM5 9h2v2H5zM9 9h2v2H9z" fill="#b8b4a2" /></svg>
        </button>
    </footer>
);

const Grip = () => (
    <svg viewBox="0 0 5 20" className="h-5 w-[5px] shrink-0"><path d="M1 1h2v2H1zM3 5h2v2H3zM1 9h2v2H1zM3 13h2v2H3zM1 17h2v2H1z" fill="#1745a8" /></svg>
);

const TASKS = [
    { label: '在线练习系统 - W...', icon: <IeLogo />, active: true },
    {
        label: 'Microsoft Excel ...',
        icon: <svg viewBox="0 0 16 16" className="h-[15px] w-[15px]"><path d="M.5.5h15v15H.5z" fill="#e8f4e8" stroke="#2f7a3a" /><path d="M3 3.500l6 9M9 3.500l-6 9" stroke="#1e6e2c" strokeWidth="2.200" /><path d="M10.500 3h4M10.500 6h4M10.500 9h4M10.500 12h4" stroke="#2f7a3a" /></svg>,
    },
    {
        label: 'Camtasia Studio ...',
        icon: <svg viewBox="0 0 16 16" className="h-[15px] w-[15px]"><rect width="16" height="16" rx="2" fill="#a9bd4a" /><path d="M0 2q6 7 16 7v6Q3 14 0 2z" fill="#f2f4cf" /><path d="M6 0q3 5 10 6V0z" fill="#d6df8a" /></svg>,
    },
    {
        label: 'Recording...',
        icon: <svg viewBox="0 0 16 16" className="h-4 w-4"><path d="M7 4h8v6H7z" fill="#c81818" stroke="#701010" /><circle cx="4" cy="3" r="2.300" fill="#c8c8c8" stroke="#222" /><path d="M4 5v9M2 6v5M6 6v5" stroke="#111" strokeWidth="1.800" /></svg>,
    },
];

const Taskbar = () => (
    <footer className="flex h-[33px] shrink-0 items-end border-t-2 border-[#3f8cf0] bg-linear-to-b from-[#3070e0] via-[#245edb] to-[#1c49b8] text-white">
        <button className="flex h-[29px] w-24 items-center gap-2 rounded-r-[8px] bg-linear-to-b from-[#57a957] via-[#3a913a] to-[#2f7d2f] pl-[10px] text-[19px] italic [text-shadow:1px_1px_1px_#1c4a1c]">
            <svg viewBox="0 0 18 16" className="h-[17px] w-[19px]"><path d="M2 2q3-2 6.500 0L7.500 8q-3-2-6.500 0z" fill="#ee5a2c" /><path d="M9.500 2.500q3.500 2 7-.2l-1 6q-3.500 2-7 .2z" fill="#84c63c" /><path d="M1 9q3-2 6.500 0l-1 5.500q-3-2-6.500 0z" fill="#4a8ef0" /><path d="M8.500 9.500q3.500 2 7 0l-1 5.500q-3.500 2-7 .2z" fill="#fbc62c" /></svg>
            开始
        </button>
        <div className="ml-[9px] flex h-[29px] items-center">
            <Grip />
            <span className="ml-[9px] flex gap-[7px]">
                <IeLogo />
                <svg viewBox="0 0 16 16" className="h-4 w-4"><path d="M1 6q2-4 7-5 5 0 7 5z" fill="#e04a3a" /><path d="M1 6h14l-3 7-4 2z" fill="#f4d43a" /><path d="M1 6l7 9q-6-1-7-9z" fill="#3f9c3a" /><path d="M15 6l-7 9q6-2 7-9z" fill="#58b83f" /></svg>
                <svg viewBox="0 0 16 16" className="h-4 w-4"><circle cx="4.500" cy="4" r="3" fill="#eee" stroke="#555" /><circle cx="11.500" cy="4" r="3" fill="#eee" stroke="#555" /><circle cx="4.500" cy="4" r="1" fill="#333" /><circle cx="11.500" cy="4" r="1" fill="#333" /><path d="M3 8.500h10V15H3zM1 10h2v4H1z" fill="#f4f4f4" /></svg>
            </span>
            <span className="ml-[9px] flex"><Grip /></span>
        </div>
        <div className="mb-[3px] ml-[6px] flex gap-[2px] text-[12px]">
            {TASKS.map((task) => (
                <button
                    key={task.label}
                    className={clsx(
                        'flex h-6 w-[158px] items-center gap-1 rounded-[3px] pl-[10px] whitespace-nowrap',
                        task.active ? 'bg-[#1e52b7] shadow-[inset_1px_1px_2px_#0f2f80]' : 'bg-[#3c81f0] shadow-[inset_1px_1px_1px_#6aa3fa]'
                    )}
                >
                    {task.icon}
                    <span><Mix s={task.label} /></span>
                </button>
            ))}
        </div>
        <div className="ml-auto flex h-[29px] items-center">
            <Grip />
            <svg viewBox="0 0 16 16" className="mr-4 ml-2 h-[15px] w-[15px]"><rect width="16" height="16" rx="2" fill="#f8efe8" /><path d="M1.500 1.500h13v13h-13z" fill="#e8552a" /><path d="M11.500 4.500H6.200a1.700 1.700 0 0 0 0 3.500h3.600a1.700 1.700 0 0 1 0 3.500H4.500" stroke="#fff" strokeWidth="2" fill="none" /></svg>
            <div className="flex h-[29px] w-28 items-center gap-[2px] border-l border-[#0a3f9c] bg-linear-to-b from-[#1f9cf0] to-[#1180d8] pl-[9px]">
                <svg viewBox="0 0 16 16" className="h-4 w-4"><path d="M1 1l6 8M6 2L3 12M15 2L8 13M10 3l3 6" stroke="#1a2ca8" strokeWidth="1.600" /><circle cx="11" cy="10.500" r="3.800" fill="#c8202c" /><circle cx="4" cy="11" r="3" fill="#2438c0" /></svg>
                <svg viewBox="0 0 16 16" className="h-4 w-4"><path d="M1 2q7-2 14 0v5q0 6-7 8-7-2-7-8z" fill="#f6f0dc" /><path d="M2.500 3q3.500-1 5 4v6.500Q3 11 2.500 3z" fill="#e88a2c" /><path d="M13.500 3q-3.500-1-5 4v6.500Q13 11 13.500 3z" fill="#58a83c" /></svg>
                <svg viewBox="0 0 16 16" className="h-4 w-4"><path d="M1 5.500h3L9 1v14l-5-4.500H1z" fill="#e0662a" stroke="#2a1a14" /><path d="M11 4v8M13.500 2.500v11" stroke="#4a1a10" strokeWidth="1.300" /></svg>
                <time className="ml-1 font-['Liberation_Mono'] text-[10px]">22:05</time>
            </div>
        </div>
    </footer>
);

const App: React.FC = () => (
    <div className="flex h-screen flex-col overflow-hidden bg-linear-to-r from-[#f4f4f4] via-[#ededE6] to-[#ece9d8] font-['Liberation_Serif','Noto_Sans_CJK_SC',serif] text-black">
        <TitleBar />
        <nav className="flex h-[23px] shrink-0 items-center gap-4 border-b border-[#b4b19c] pl-[10px] text-[12px]">
            {MENUS.map(([label, k]) => <button key={k}>{label}<AccessKey k={k} /></button>)}
        </nav>
        <AddressRow />
        <FavoritesBar />
        <CommandBar />
        <div className="flex min-h-0 flex-1 flex-col border-t-2 border-r-2 border-b-2 border-l-2 border-[#7c786c] border-r-[#f1efe2] border-b-white border-l-[#9c968a] bg-white">
            <Banner />
            <div className="flex min-h-0 flex-1">
                <Sidebar />
                <main className="flex min-w-0 flex-1 flex-col">
                    <PageHeader />
                    <div className="flex min-h-0 flex-1">
                        <div className="flex min-w-0 flex-1 flex-col overflow-hidden bg-[#f1f1f1] pl-[18px]">
                            <StepBar />
                            <div className="mt-[18px] flex min-h-0 flex-1 gap-6">
                                <section className="min-w-0 flex-1 border border-b-0 border-[#ccc] bg-[#fdfdfd] pt-[35px] pr-9 pl-[34px]">
                                    <VoucherForm />
                                    <VoucherTable />
                                </section>
                                <TaskPanel />
                            </div>
                        </div>
                        <VScroll />
                    </div>
                    <HScroll />
                </main>
            </div>
        </div>
        <StatusBar />
        <Taskbar />
    </div>
);

export default App;
